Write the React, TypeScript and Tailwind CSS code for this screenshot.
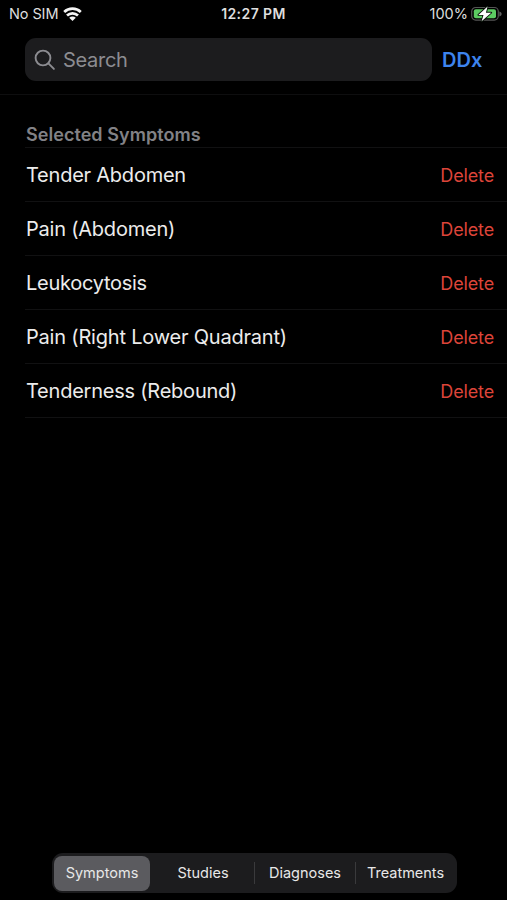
const symptoms = [
  { name: 'Tender Abdomen', spacing: 'tracking-[-0.23px]' },
  { name: 'Pain (Abdomen)', spacing: 'tracking-[-0.22px]' },
  { name: 'Leukocytosis', spacing: 'tracking-[-0.28px]' },
  { name: 'Pain (Right Lower Quadrant)', spacing: 'tracking-[-0.2px]' },
  { name: 'Tenderness (Rebound)', spacing: 'tracking-[-0.23px]' },
];

function StatusBar() {
  return (
    <header className="grid h-7 grid-cols-3 items-center pl-[9px] pr-[5px] text-[14.5px] leading-7 text-[#dedede]">
      <div className="flex items-center gap-[5px]">
        <span className="tracking-[-0.1px]">No SIM</span>
        <svg width="19" height="14" viewBox="0 0 19 14" fill="none" stroke="#f5f5f5" strokeWidth="2.7">
          <path d="M1.2 5C5.8.6 13.2.6 17.8 5" />
          <path d="M4 8.5C7.1 5.6 11.9 5.6 15 8.5" />
          <path d="M6.2 10.7C8 9.1 11 9.1 12.8 10.7L9.5 14Z" fill="#f5f5f5" stroke="none" />
        </svg>
      </div>
      <span className="pr-[4px] text-center text-[14px] font-semibold tracking-[0.42px]">12:27 PM</span>
      <div className="flex items-center justify-end gap-[3px]">
        <span>100%</span>
        <svg width="31" height="16" viewBox="0 0 31 16">
          <rect x="0.7" y="1.5" width="26.6" height="12.6" rx="4" fill="none" stroke="#555" strokeWidth="1.2" />
          <path d="M28.4 5.4C31.4 6.4 31.4 9.4 28.4 10.4Z" fill="#606060" />
          <rect x="2.8" y="3.3" width="22.2" height="9" rx="2" fill="#5ccb62" />
          <path
            d="M16.6.4 7.4 8.9h5.1L10.6 15.3l9.6-8.6h-5.3Z"
            fill="#fff"
            stroke="#0a140a"
            strokeWidth="1.8"
            strokeLinejoin="round"
            paintOrder="stroke"
          />
        </svg>
      </div>
    </header>
  );
}

function SearchBar() {
  return (
    <div className="flex h-[67px] items-start border-b border-[#0e0e0f] pl-[25px] pt-[10px]">
      <div className="flex h-[43px] w-[407px] items-center rounded-[11px] bg-[#1c1c1e] pl-[9px] text-[#8c8c91]">
        <svg width="22" height="22" viewBox="0 0 22 22" fill="none" stroke="currentColor" strokeWidth="1.9" strokeLinecap="round">
          <circle cx="9" cy="9" r="7.4" />
          <path d="m14.4 14.4 5.5 5.5" />
        </svg>
        <span className="ml-[7px] text-[20px] tracking-[-0.3px]">Search</span>
      </div>
      <button className="ml-[10px] h-[43px] text-[20px] font-semibold text-[#3d84ee]">DDx</button>
    </div>
  );
}

export default function App() {
  return (
    <div className="flex h-[900px] w-[507px] flex-col overflow-hidden bg-black font-['Inter',sans-serif]">
      <StatusBar />
      <SearchBar />
      <main className="flex-1 pl-[26px]">
        <h2 className="-ml-px h-[53px] border-b border-[#111112] pl-px pt-[26px] text-[18px] font-semibold leading-[27px] tracking-[0.05px] text-[#828286]">
          Selected Symptoms
        </h2>
        <ul>
          {symptoms.map((s) => (
            <li key={s.name} className="-ml-px flex h-[54px] items-center justify-between border-b border-[#111112] pl-px pr-[13px] pt-px">
              <span className={`text-[20px] text-[#ececec] ${s.spacing}`}>{s.name}</span>
              <button className="pt-px text-[18px] tracking-[-0.15px] text-[#dc4439]">Delete</button>
            </li>
          ))}
        </ul>
      </main>
      <nav className="mb-[7px] ml-[52px] flex h-10 w-[405px] items-center rounded-[11px] bg-[#1c1c1e] p-[2px] text-[14.5px] text-[#e8e8e8]">
        <button className="h-[35px] w-[96px] rounded-[8px] bg-[#5b5b5f]">Symptoms</button>
        <button className="h-[35px] w-[104px] pl-[2px]">Studies</button>
        <span className="h-[22px] w-px bg-[#3a3a3c]" />
        <button className="h-[35px] w-[100px]">Diagnoses</button>
        <span className="h-[22px] w-px bg-[#3a3a3c]" />
        <button className="h-[35px] flex-1">Treatments</button>
      </nav>
    </div>
  );
}
